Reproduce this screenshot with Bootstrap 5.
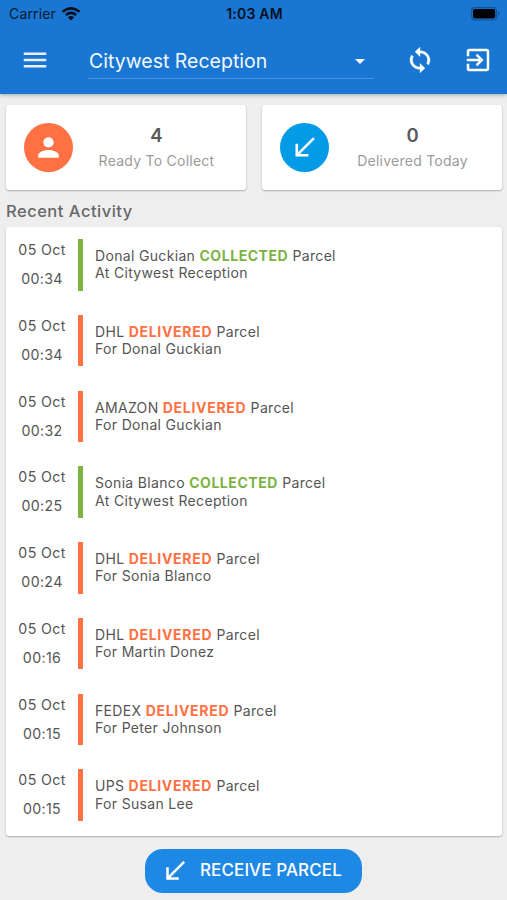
<!DOCTYPE html>
<html lang="en">
<head>
<meta charset="utf-8">
<meta name="viewport" content="width=device-width, initial-scale=1">
<title>Recent Activity</title>
<link rel="stylesheet" href="https://cdn.jsdelivr.net/npm/bootstrap@5.3.0/dist/css/bootstrap.min.css">
<style>
body{font-family:Inter,"Liberation Sans",sans-serif;background:#eee;color:#555;height:900px;overflow:hidden}
svg{display:block;flex:none}
.app-header{background:#1976d2;height:94px;box-shadow:0 1px 4px rgba(0,0,0,.3)}
.status-bar{height:28px;font-size:14px;line-height:28px;color:#0a1a2e;padding:0 7px 0 9px}
.status-side{flex:1 1 0}
.carrier{letter-spacing:.15px}
.clock{font-weight:600;font-size:14px;letter-spacing:.2px;color:#06101d}
.toolbar{height:64px;padding:0 14px 0 20px}
.site-select{width:286px;height:38px;margin-left:38px;border-bottom:1px solid #4c92dc;font-size:19.5px;line-height:38px;letter-spacing:0;color:#f2f8ff;padding:2px 0 0 1px}
.caret{border:5px solid transparent;border-top-color:#fff;border-bottom:0;margin:2px 9px 0 0}
.logout{margin-left:28px}
.panel{background:#fff;border-radius:3px;box-shadow:0 1px 2px rgba(0,0,0,.28)}
.stats{padding:11px 5px 0 6px;gap:16px}
.stat{height:85px;padding:0 6px 0 18px}
.disc{width:49px;height:49px}
.count{font-size:18.5px;font-weight:600;line-height:26px;color:#5a5a5a}
.label{font-size:14px;line-height:26px;letter-spacing:.25px;color:#9b9b9b}
.heading{font-size:16.5px;font-weight:500;line-height:24px;letter-spacing:.5px;color:#686868;margin:9px 0 4px 6px}
.activity{margin:0 5px 0 6px;height:609px;padding-top:12px}
.entry{height:75.75px}
.when{width:72px;font-size:14.2px;line-height:29.2px;letter-spacing:.35px;text-align:center;margin-top:-4px}
.stripe{width:5px;height:51.5px;background:#ff7043}
.collected .stripe{background:#7cb342}
.what{font-size:14px;line-height:17.4px;letter-spacing:.33px;margin:8px 0 0 12px}
.state{font-weight:700;color:#ff7043;letter-spacing:.7px}
.collected .state{color:#7cb342;letter-spacing:.55px}
.receive{width:217px;height:44px;margin:13px 0 0 145px;background:#1e88e5;color:#fff;border:0;border-radius:18px;font-size:17px;font-weight:500;letter-spacing:.1px;padding:0 0 0 15px}
.receive svg{margin-right:10px}
</style>
</head>
<body>
<header class="app-header position-relative">
  <div class="status-bar d-flex align-items-center">
    <div class="status-side d-flex align-items-center"><span class="carrier">Carrier</span>
      <svg style="margin-left:5px" width="20" height="14" viewBox="0 0 20 14" fill="none" stroke="#06101d" stroke-width="2.6"><path d="M1.500 4.800Q10-2.200 18.500 4.800M4.800 8Q10 3.800 15.200 8"/><path d="M10 13.500 6.800 10.300Q10 7.800 13.200 10.300Z" fill="#06101d" stroke="none"/></svg>
    </div>
    <span class="clock">1:03 AM</span>
    <div class="status-side d-flex justify-content-end"><svg width="29" height="14" viewBox="0 0 29 14"><rect x=".6" y=".6" width="25" height="12.400" rx="3.500" fill="none" stroke="#11549a" stroke-width="1.200"/><rect x="2" y="2" width="22.200" height="9.600" rx="2" fill="#000"/><path d="M27 4.500v4.600q3-2.300 0-4.600" fill="#11549a"/></svg></div>
  </div>
  <div class="toolbar d-flex align-items-center">
    <svg width="30" height="30" viewBox="0 0 24 24" fill="#e8f3ff"><path d="M3 18h18v-2H3v2zm0-5h18v-2H3v2zm0-7v2h18V6H3z"/></svg>
    <div class="site-select d-flex justify-content-between align-items-center"><span>Citywest Reception</span><span class="caret"></span></div>
    <svg class="ms-auto" width="30" height="28" viewBox="0 0 24 24" preserveAspectRatio="none" fill="#fff" stroke="#fff" stroke-width=".3"><path d="M12 4V1L8 5l4 4V6c3.310 0 6 2.690 6 6 0 1.010-.25 1.970-.7 2.800l1.460 1.460C19.540 15.030 20 13.570 20 12c0-4.420-3.580-8-8-8zm0 14c-3.310 0-6-2.690-6-6 0-1.010.25-1.970.7-2.800L5.240 7.740C4.460 8.970 4 10.430 4 12c0 4.420 3.580 8 8 8v3l4-4-4-4v3z"/></svg>
    <svg class="logout" width="30" height="30" viewBox="0 0 24 24" fill="#fff"><path d="M10.090 15.590 11.500 17l5-5-5-5-1.410 1.410L12.670 11H3v2h9.670l-2.580 2.590zM19 3H5a2 2 0 0 0-2 2v4h2V5h14v14H5v-4H3v4a2 2 0 0 0 2 2h14c1.100 0 2-.9 2-2V5c0-1.100-.9-2-2-2z"/></svg>
  </div>
</header>
<main>
  <section class="stats d-flex">
    <div class="panel stat d-flex align-items-center flex-fill w-50">
      <div class="disc rounded-circle d-flex align-items-center justify-content-center" style="background:#ff7043"><svg width="31" height="31" viewBox="0 0 24 24" fill="#fff"><path d="M12 12c2.210 0 4-1.790 4-4s-1.790-4-4-4-4 1.790-4 4 1.790 4 4 4zm0 2c-2.670 0-8 1.340-8 4v2h16v-2c0-2.660-5.330-4-8-4z"/></svg></div>
      <div class="flex-fill text-center"><div class="count">4</div><div class="label">Ready To Collect</div></div>
    </div>
    <div class="panel stat d-flex align-items-center flex-fill w-50">
      <div class="disc rounded-circle d-flex align-items-center justify-content-center" style="background:#039be5"><svg width="31" height="31" viewBox="0 0 24 24" fill="#fff"><path d="M20 5.410 18.590 4 7 15.590V9H5v10h10v-2H8.410z"/></svg></div>
      <div class="flex-fill text-center"><div class="count">0</div><div class="label">Delivered Today</div></div>
    </div>
  </section>
  <h1 class="heading">Recent Activity</h1>
  <section class="panel activity">
    <div class="entry collected d-flex"><div class="when">05 Oct<br>00:34</div><div class="stripe"></div><div class="what">Donal Guckian <span class="state">COLLECTED</span> Parcel<br>At Citywest Reception</div></div>
    <div class="entry d-flex"><div class="when">05 Oct<br>00:34</div><div class="stripe"></div><div class="what">DHL <span class="state">DELIVERED</span> Parcel<br>For Donal Guckian</div></div>
    <div class="entry d-flex"><div class="when">05 Oct<br>00:32</div><div class="stripe"></div><div class="what">AMAZON <span class="state">DELIVERED</span> Parcel<br>For Donal Guckian</div></div>
    <div class="entry collected d-flex"><div class="when">05 Oct<br>00:25</div><div class="stripe"></div><div class="what">Sonia Blanco <span class="state">COLLECTED</span> Parcel<br>At Citywest Reception</div></div>
    <div class="entry d-flex"><div class="when">05 Oct<br>00:24</div><div class="stripe"></div><div class="what">DHL <span class="state">DELIVERED</span> Parcel<br>For Sonia Blanco</div></div>
    <div class="entry d-flex"><div class="when">05 Oct<br>00:16</div><div class="stripe"></div><div class="what">DHL <span class="state">DELIVERED</span> Parcel<br>For Martin Donez</div></div>
    <div class="entry d-flex"><div class="when">05 Oct<br>00:15</div><div class="stripe"></div><div class="what">FEDEX <span class="state">DELIVERED</span> Parcel<br>For Peter Johnson</div></div>
    <div class="entry d-flex"><div class="when">05 Oct<br>00:15</div><div class="stripe"></div><div class="what">UPS <span class="state">DELIVERED</span> Parcel<br>For Susan Lee</div></div>
  </section>
  <button type="button" class="btn receive d-flex align-items-center"><svg width="30" height="30" viewBox="0 0 24 24" fill="#fff"><path d="M20 5.410 18.590 4 7 15.590V9H5v10h10v-2H8.410z"/></svg><span>RECEIVE PARCEL</span></button>
</main>
<script src="https://cdn.jsdelivr.net/npm/bootstrap@5.3.0/dist/js/bootstrap.bundle.min.js"></script>
</body>
</html>
